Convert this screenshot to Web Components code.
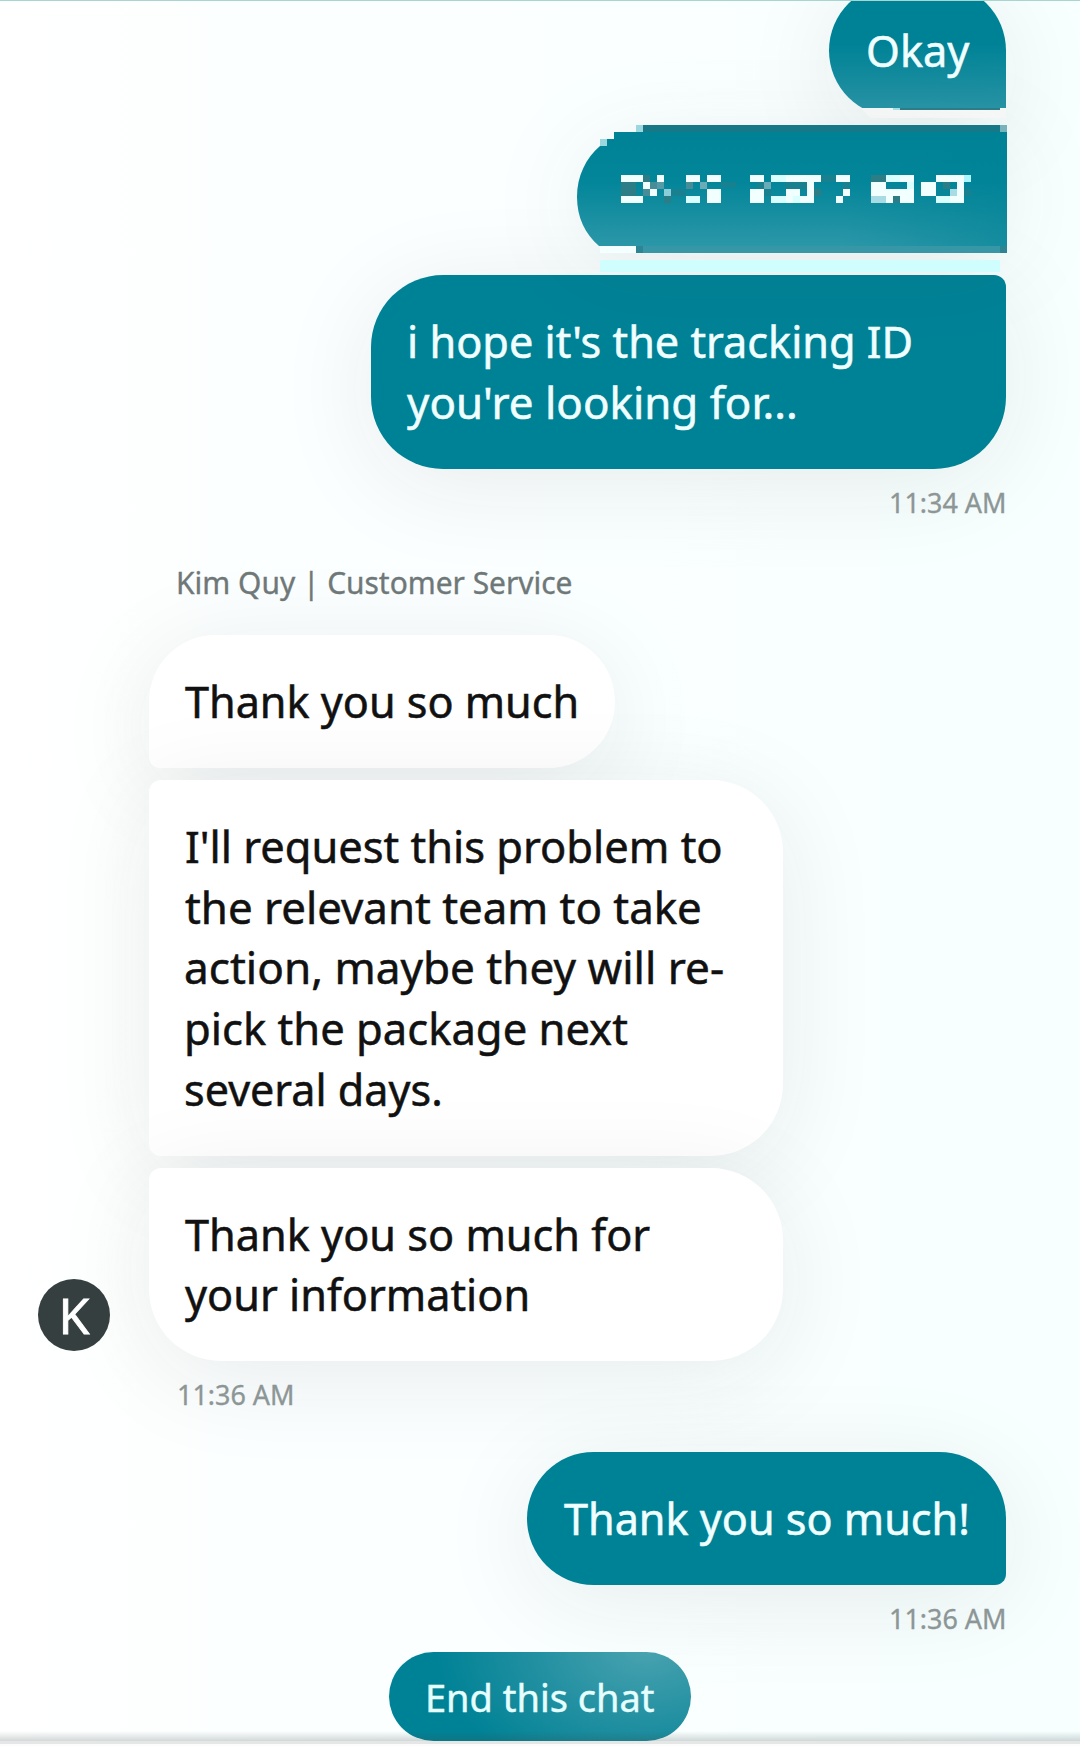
<!DOCTYPE html>
<html lang="en">
<head>
<meta charset="utf-8">
<title>Customer Service Chat</title>
<style>
    html, body { margin: 0; height: 1746px; overflow: hidden; }
    body { background: #fff; font-family: 'Noto Sans', 'Open Sans', sans-serif; }
</style>
</head>
<body>
<chat-window>
    <chat-bubble sent class="okay" style="--w:177px; --r:72px 72px 0 72px; margin-top:-16px">
        <text-line ink="3" width="102">Okay</text-line>
    </chat-bubble>
    <redacted-bubble></redacted-bubble>
    <chat-bubble sent style="--w:635px; --r:72px 12px 72px 72px; margin-top:22px">
        <text-line ink="3" width="501">i hope it's the tracking ID</text-line>
        <text-line ink="0" width="388">you're looking for...</text-line>
    </chat-bubble>
    <time-stamp sent><text-line size="27" ink="1" width="113">11:34 AM</text-line></time-stamp>

    <agent-name><text-line size="31" ink="1" width="392">Kim Quy | Customer Service</text-line></agent-name>
    <message-group>
        <user-avatar slot="avatar">K</user-avatar>
        <chat-bubble style="--w:466px; --r:72px 72px 72px 12px">
            <text-line ink="0" width="391">Thank you so much</text-line>
        </chat-bubble>
        <chat-bubble style="--w:634px; --r:12px 72px 72px 12px">
            <text-line ink="1" width="535">I'll request this problem to</text-line>
            <text-line ink="0" width="515">the relevant team to take</text-line>
            <text-line ink="1" width="537">action, maybe they will re-</text-line>
            <text-line ink="2" width="440">pick the package next</text-line>
            <text-line ink="1" width="254">several days.</text-line>
        </chat-bubble>
        <chat-bubble style="--w:634px; --r:12px 72px 72px 72px">
            <text-line ink="0" width="465">Thank you so much for</text-line>
            <text-line ink="0" width="342">your information</text-line>
        </chat-bubble>
    </message-group>
    <time-stamp><text-line size="27" ink="0" width="113">11:36 AM</text-line></time-stamp>

    <chat-bubble sent style="--w:479px; --r:72px 72px 12px 72px; margin-top:36px">
        <text-line ink="1" width="403">Thank you so much!</text-line>
    </chat-bubble>
    <time-stamp sent><text-line size="27" ink="1" width="113">11:36 AM</text-line></time-stamp>

    <end-chat-button slot="footer"><text-line size="37.5" ink="1" width="226">End this chat</text-line></end-chat-button>
</chat-window>

<script>
const measure = document.createElement('canvas').getContext('2d');

function attach (element, html) {
    const template = document.createElement('template');
    template.innerHTML = html;
    element.attachShadow({ mode: 'open' });
    element.shadowRoot.appendChild(template.content.cloneNode(true));
}

class ChatWindow extends HTMLElement {
    constructor () {
        super();
        attach(this, `
<style>
    :host {
        display: flex;
        flex-direction: column;
        box-sizing: border-box;
        position: relative;
        height: 1746px;
        overflow: hidden;
        background: linear-gradient(90deg, #fff 0, #fcffff 22%, #f9ffff 75%, #f7ffff 100%);
    }
    .edge { position: absolute; top: 0; left: 0; right: 0; height: 1px; background: #a9d5d1; z-index: 3; }
    main { display: flex; flex-direction: column; height: 1652px; flex: none; }
    footer { display: flex; justify-content: center; height: 89px; flex: none; position: relative; }
    .bar { position: relative; height: 5px; background: linear-gradient(#e5e7e7 0 3px, #fcfcfc 3px); }
    .shade { position: absolute; left: 0; right: 0; top: -10px; height: 10px; background: linear-gradient(rgba(60,75,75,0), rgba(60,75,75,.22)); }
</style>
<div class="edge"></div>
<main><slot></slot></main>
<footer><slot name="footer"></slot></footer>
<div class="bar"><div class="shade"></div></div>
`);
    }
}
window.customElements.define('chat-window', ChatWindow);

// One line of text, stretched so that its ink takes up the given width
class TextLine extends HTMLElement {
    constructor () {
        super();
        attach(this, `
<style>
    :host { display: block; white-space: nowrap; }
    span { display: inline-block; transform-origin: 0 50%; -webkit-text-stroke: .012em currentColor; }
</style>
<span><slot></slot></span>
`);
    }

    connectedCallback () {
        const size = this.getAttribute('size') || '44';
        const width = Number(this.getAttribute('width'));
        const ink = Number(this.getAttribute('ink'));
        const span = this.shadowRoot.querySelector('span');

        this.style.fontSize = size + 'px';
        measure.font = size + 'px "Noto Sans"';
        const box = measure.measureText(this.textContent);
        const scale = width / (box.actualBoundingBoxRight + box.actualBoundingBoxLeft);
        span.style.transform = `translate(${ink + box.actualBoundingBoxLeft * scale}px, -0.5px) scaleX(${scale})`;
    }
}
window.customElements.define('text-line', TextLine);

class ChatBubble extends HTMLElement {
    constructor () {
        super();
        attach(this, `
<style>
    :host {
        display: block;
        flex: none;
        box-sizing: border-box;
        width: var(--w);
        padding: 36px;
        border-radius: var(--r);
        background: #fff;
        color: #111;
        line-height: 60.75px;
        box-shadow: 0 16px 100px rgba(35, 35, 38, .085);
    }
    :host([sent]) { align-self: flex-end; margin-right: 74px; background: #008296; color: #f0ffff; }
    :host(.okay) {
        height: 133px;
        background: linear-gradient(#008296 45%, #2995a6 95%);
    }
</style>
<slot></slot>
`);
    }
}
window.customElements.define('chat-bubble', ChatBubble);

// The mosaic covers the message; cells are x, y, width, height, fill
const cells = [
    [621,175,22,7,'w'], [643,175,7,7,'d'], [657,175,7,7,'w'], [686,175,14,7,'w'], [707,175,14,7,'w'],
    [621,182,15,14,'d'], [643,182,7,7,'w'], [650,182,7,7,'g'], [657,182,7,7,'h'], [686,182,7,7,'g'], [700,182,7,7,'m'], [721,182,15,5,'s'],
    [643,189,7,7,'g'], [650,189,7,7,'w'], [664,189,7,7,'l'], [671,189,15,7,'s'], [707,189,14,14,'w'],
    [621,196,22,7,'w'], [664,196,7,7,'d'], [686,196,14,7,'c'],
    [750,175,14,7,'w'], [771,175,15,7,'c'], [786,175,35,7,'w'], [821,175,15,7,'s'], [836,175,14,7,'w'],
    [757,182,7,7,'s'], [764,182,7,7,'m'], [785,182,22,7,'s'], [807,182,7,14,'w'], [843,182,7,7,'s'],
    [750,189,14,14,'w'], [764,189,7,7,'s'], [786,189,14,7,'w'], [814,189,7,7,'d'], [843,189,7,7,'w'],
    [771,196,15,7,'c'], [786,196,7,7,'w'], [793,196,7,7,'c'], [800,196,14,7,'w'], [836,196,7,7,'w'],
    [871,175,15,7,'d'], [886,175,28,7,'c'], [900,175,14,7,'w'],
    [871,182,15,14,'w'], [907,182,7,7,'c'], [886,189,28,7,'w'],
    [871,196,15,7,'p'], [886,196,7,7,'w'], [893,196,7,7,'d'], [900,196,14,7,'w'],
    [921,182,15,14,'w'], [936,175,28,7,'w'], [964,175,7,7,'b'],
    [943,182,7,7,'d'], [957,182,7,14,'w'], [950,189,7,7,'p'], [964,189,7,7,'s'],
    [936,196,14,7,'c'], [950,196,14,7,'w']
];
const shades = { w: '#f2ffff', c: '#d9ffff', b: '#aef6ff', p: '#a8dbe3', l: '#8bced9', m: '#69acb8', h: '#559ba7', g: '#478d98', d: '#2d7d87', s: '#18808f' };

class RedactedBubble extends HTMLElement {
    constructor () {
        super();
        attach(this, `
<style>
    :host { display: block; flex: none; height: 145px; margin-top: -9px; box-sizing: border-box; }
    svg { display: block; width: 1080px; height: 167px; position: relative; overflow: visible; }
    .body { filter: drop-shadow(0 10px 45px rgba(35, 35, 38, .08)); }
</style>
<svg viewBox="0 108 1080 167" shape-rendering="crispEdges">
    <defs>
        <linearGradient id="fade" x1="0" y1="0" x2="0" y2="1">
            <stop offset="0" stop-color="#008296"/>
            <stop offset=".45" stop-color="#04869a"/>
            <stop offset="1" stop-color="#2b97a8"/>
        </linearGradient>
        <linearGradient id="side" x1="0" y1="0" x2="1" y2="0">
            <stop offset=".6" stop-color="#008296" stop-opacity="0"/>
            <stop offset="1" stop-color="#008296" stop-opacity=".5"/>
        </linearGradient>
    </defs>
    <path fill="#f8f9f9" d="M860 108H1006V118H870Z"/>
    <path class="body" fill="url(#fade)" shape-rendering="auto" d="M600 146V139H614V132H1007V246H599C585 234 577 217 577 197C577 176 586 158 600 146Z"/>
    <path fill="#2d7d87" d="M900 108H1000V110H900Z"/>
    <path fill="#a8dbe3" d="M893 108H900V110H893Z"/>
    <path fill="#f4ffff" d="M600 246H636V253H600Z"/>
    <path fill="url(#side)" d="M600 132H1007V246H600Z"/>
    <path fill="#177887" d="M643 125H1000V132H643Z"/>
    <path fill="#9bd7df" d="M636 125H643V132H636ZM600 139H607V146H600Z"/>
    <path fill="#76b3bb" d="M1000 125H1007V132H1000Z"/>
    <path fill="#3797a6" d="M636 246H1007V253H636Z"/>
    <path fill="#2d8594" d="M636 246H643V253H636ZM1000 246H1007V253H1000Z"/>
    <path fill="#d0feff" d="M600 260H1000V272H600Z"/>
    <g id="cells"></g>
</svg>
`);
        this.shadowRoot.querySelector('#cells').innerHTML = cells
            .map(([x, y, w, h, s]) => `<rect x="${x}" y="${y}" width="${w}" height="${h}" fill="${shades[s]}"/>`)
            .join('');
    }
}
window.customElements.define('redacted-bubble', RedactedBubble);

class MessageGroup extends HTMLElement {
    constructor () {
        super();
        attach(this, `
<style>
    :host { display: flex; flex: none; align-items: flex-end; gap: 39px; margin: 29.5px 0 0 38px; }
    .avatar { display: flex; padding-bottom: 10px; position: relative; }
    .bubbles { display: flex; flex-direction: column; gap: 12px; }
</style>
<div class="avatar"><slot name="avatar"></slot></div>
<div class="bubbles"><slot></slot></div>
`);
    }
}
window.customElements.define('message-group', MessageGroup);

class UserAvatar extends HTMLElement {
    constructor () {
        super();
        attach(this, `
<style>
    :host {
        display: flex;
        align-items: center;
        justify-content: center;
        width: 72px;
        height: 72px;
        border-radius: 50%;
        background: #363f3f;
        color: #fff;
        font-size: 50px;
        line-height: 72px;
        -webkit-text-stroke: .8px #fff;
    }
</style>
<slot></slot>
`);
    }
}
window.customElements.define('user-avatar', UserAvatar);

class AgentName extends HTMLElement {
    constructor () {
        super();
        attach(this, `
<style>
    :host { display: block; flex: none; position: relative; margin: 36px 0 0 178px; height: 46px; line-height: 45px; color: #6f7878; }
</style>
<slot></slot>
`);
    }
}
window.customElements.define('agent-name', AgentName);

class TimeStamp extends HTMLElement {
    constructor () {
        super();
        attach(this, `
<style>
    :host { display: block; flex: none; position: relative; width: 116px; height: 40px; margin: 15px 0 0 179px; line-height: 38px; color: #8c9696; }
    :host([sent]) { margin: 15px 0 0 890px; }
</style>
<slot></slot>
`);
    }
}
window.customElements.define('time-stamp', TimeStamp);

class EndChatButton extends HTMLElement {
    constructor () {
        super();
        attach(this, `
<style>
    :host {
        display: block;
        box-sizing: border-box;
        width: 302px;
        height: 89px;
        padding-left: 38px;
        border-radius: 44.5px;
        background: radial-gradient(ellipse 210px 140px at 85% -5%, #4aa3b0 0, #2491a2 50%, #008296 100%);
        color: #e6ffff;
        line-height: 91px;
    }
</style>
<slot></slot>
`);
    }
}
window.customElements.define('end-chat-button', EndChatButton);
</script>
</body>
</html>
